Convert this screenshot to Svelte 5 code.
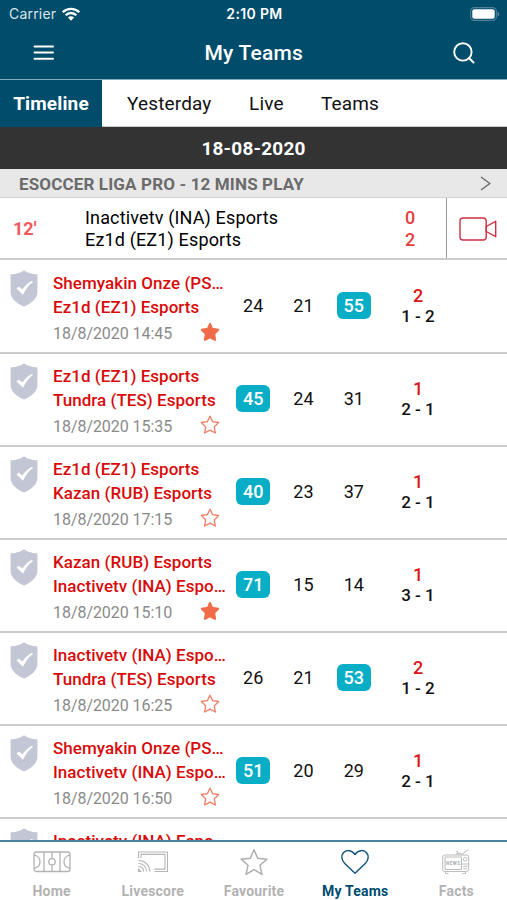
<script>
  const matches = [
    { home: 'Shemyakin Onze (PS…', away: 'Ez1d (EZ1) Esports', date: '18/8/2020 14:45', fav: true, odds: [24, 21, 55], best: 2, tip: '2', score: '1 - 2' },
    { home: 'Ez1d (EZ1) Esports', away: 'Tundra (TES) Esports', date: '18/8/2020 15:35', fav: false, odds: [45, 24, 31], best: 0, tip: '1', score: '2 - 1' },
    { home: 'Ez1d (EZ1) Esports', away: 'Kazan (RUB) Esports', date: '18/8/2020 17:15', fav: false, odds: [40, 23, 37], best: 0, tip: '1', score: '2 - 1' },
    { home: 'Kazan (RUB) Esports', away: 'Inactivetv (INA) Espo…', date: '18/8/2020 15:10', fav: true, odds: [71, 15, 14], best: 0, tip: '1', score: '3 - 1' },
    { home: 'Inactivetv (INA) Espo…', away: 'Tundra (TES) Esports', date: '18/8/2020 16:25', fav: false, odds: [26, 21, 53], best: 2, tip: '2', score: '1 - 2' },
    { home: 'Shemyakin Onze (PS…', away: 'Inactivetv (INA) Espo…', date: '18/8/2020 16:50', fav: false, odds: [51, 20, 29], best: 0, tip: '1', score: '2 - 1' }
  ];
</script>

{#snippet shield()}
  <svg class="shield" width="28" height="37" viewBox="0 0 28 37">
    <path d="M14 0.3C16.5 2.6 21.5 4.3 27.4 4.3V21.5C27.4 28.5 22 33 14 36.5C6 33 .6 28.5 .6 21.5V4.3C6.500 4.3 11.500 2.6 14 .3Z" fill="#c3c6d4" />
    <path d="M6.500 18.500l2.300-2 3.600 3.100C14.500 16.300 17.800 13 22 10.800l1 1.200C18.600 15.300 15.600 19.300 13 24.800Z" fill="#fff" />
  </svg>
{/snippet}

<div class="screen">
  <header>
    <div class="status">
      <span class="carrier">Carrier
        <svg width="18" height="14" viewBox="0 0 18 14" fill="none" stroke="#fff" stroke-width="2.300">
          <path d="M.8 5.200a11.600 11.600 0 0 1 16.400 0M3.700 8.200a7.500 7.500 0 0 1 10.600 0" />
          <path d="M9 13.700 5.900 10.600a4.400 4.400 0 0 1 6.200 0Z" fill="#fff" stroke="none" />
        </svg>
      </span>
      <span class="time">2:10 PM</span>
      <svg class="battery" width="30" height="14" viewBox="0 0 30 14">
        <rect x=".6" y=".6" width="25.800" height="12.800" rx="3.800" fill="none" stroke="#4f8299" stroke-width="1.100" />
        <rect x="2.300" y="2.300" width="22.400" height="9.400" rx="2" fill="#fff" />
        <path d="M27.700 4.700c1.800.7 1.800 3.900 0 4.600Z" fill="#6794aa" />
      </svg>
    </div>
    <div class="titlebar">
      <svg width="22" height="18" viewBox="0 0 22 18" stroke="#fff" stroke-width="1.900" stroke-linecap="round"><path d="M1.500 2.500h18.500M1.500 8.500h18.500M1.500 14.800h18.500" /></svg>
      <h1>My Teams</h1>
      <svg width="22" height="22" viewBox="0 0 22 22" fill="none" stroke="#fff" stroke-width="1.900" stroke-linecap="round"><circle cx="9.900" cy="9.900" r="8.700" /><path d="m16 16 4.500 4.500" /></svg>
    </div>
  </header>

  <nav class="tabs">
    <span class="active">Timeline</span>
    <span class="yesterday">Yesterday</span>
    <span class="live-tab">Live</span>
    <span class="teams-tab">Teams</span>
  </nav>
  <div class="date">18-08-2020</div>
  <div class="league">
    <span>ESOCCER LIGA PRO - 12 MINS PLAY</span>
    <svg width="11" height="15" viewBox="0 0 11 15" fill="none" stroke="#666" stroke-width="1.300"><path d="m1 1 8.800 6.500L1 14" /></svg>
  </div>
  <section class="live">
    <span class="minute">12'</span>
    <div class="names"><span>Inactivetv (INA) Esports</span><span>Ez1d (EZ1) Esports</span></div>
    <div class="goals"><span>0</span><span>2</span></div>
    <div class="video">
      <svg width="38" height="24" viewBox="0 0 38 24" fill="none" stroke="#cf2e43" stroke-width="1.400" stroke-linejoin="round"><rect x="1" y="1" width="26.200" height="22" rx="3" /><path d="M27.200 9.500 36.700 4.300v15.400L27.200 14.500Z" /></svg>
    </div>
  </section>

  <main>
    {#each matches as match}
      <article>
        {@render shield()}
        <div class="info">
          <span class="team">{match.home}</span>
          <span class="team">{match.away}</span>
          <div class="when">
            <span>{match.date}</span>
            {#if match.fav}
              <svg width="20" height="20" viewBox="0 0 20 20" fill="#f06c49" stroke="#f06c49" stroke-width="2" stroke-linejoin="round"><path d="m10 1.800 2.200 5 6 .9-4 4.200.9 6L10 15.400l-5.100 2.500.9-6-4-4.200 6-.9Z" /></svg>
            {:else}
              <svg width="20" height="20" viewBox="0 0 20 20" fill="none" stroke="#ee7c61" stroke-width="1.300" stroke-linejoin="round"><path d="m10 1.200 2.650 5.500 6 .8-4.350 4.400 1.050 6.100L10 15.200l-5.350 2.800 1.050-6.100L1.350 7.500l6-.8Z" /></svg>
            {/if}
          </div>
        </div>
        <div class="odds">
          {#each match.odds as odd, i}
            <span class:best={i === match.best}>{odd}</span>
          {/each}
        </div>
        <div class="result"><b>{match.tip}</b><span>{match.score}</span></div>
      </article>
    {/each}
    <article>
      {@render shield()}
      <div class="info"><span class="team">Inactivetv (INA) Espo</span></div>
    </article>
  </main>

  <nav class="bottom">
    <div>
      <svg width="40" height="28" viewBox="0 0 40 28" fill="none" stroke="#b3b3b3" stroke-width="1.300"><rect x="2" y="4" width="36" height="19.500" rx="2" /><path d="M20 4v6.500M20 17v6.500M2 7.500h1.500c6 2 6 10.500 0 12.500H2M38 7.500h-1.500c-6 2-6 10.500 0 12.500H38M12 4v19.500M28 4v19.500" /><circle cx="20" cy="13.750" r="3.200" /></svg>
      <span>Home</span>
    </div>
    <div>
      <svg width="34" height="28" viewBox="0 0 34 28" fill="none" stroke="#b5b5b5" stroke-width="1.100"><path d="M2.500 10V4h29v19.500H18.500M5 10V6.400h24v14.700H18.500" /><path d="M2.500 12.500c6.500 0 11 4.500 11.500 11M2.500 15.500c4.500 0 8 3.500 8.300 8M2.500 18.500c3 0 5 2 5.200 5M2.500 21.200l2.200 2.300H2.500Z" /></svg>
      <span>Livescore</span>
    </div>
    <div>
      <svg width="30" height="28" viewBox="0 0 30 28" fill="none" stroke="#adadad" stroke-width="1.500" stroke-linejoin="round"><path d="m15 1.800 3.700 8.400 9.200 1-6.900 6.100 2 9.100-8-4.700-8 4.700 2-9.100-6.900-6.100 9.200-1Z" /></svg>
      <span>Favourite</span>
    </div>
    <div class="current">
      <svg width="30" height="28" viewBox="0 0 30 28" fill="none" stroke="#14577a" stroke-width="1.500" stroke-linejoin="round"><path d="M15 25.200 5 15.800C1.600 12.500.8 7.900 3.200 5 6.300 1.300 12 1.900 15 6.500c3-4.600 8.700-5.200 11.800-1.500 2.400 2.900 1.600 7.500-1.800 10.800Z" /></svg>
      <span>My Teams</span>
    </div>
    <div>
      <svg width="30" height="28" viewBox="0 0 30 28" fill="none" stroke="#bcbcbc" stroke-width="1"><rect x="1.700" y="7" width="26" height="16.500" rx="2" /><path d="M4 9h16.500v12.500H4ZM4.500 23.500v2h3M24.500 23.500v2h-3M18.500 7l-2.600-3.500M20.500 7l5.400-4.500M15.500 3.500h1.500M26 2h1.500" /><path d="M14.500 7c1-2.300 6.500-2.300 7.500 0M20.500 16h7" /><circle cx="24.200" cy="11.300" r="1.800" /><path d="M22.300 18.300h4M22.300 20.800h4" /><text x="12.300" y="16.700" text-anchor="middle" class="news">NEWS</text></svg>
      <span>Facts</span>
    </div>
  </nav>
</div>

<style>
  :global(body) { margin: 0; background: #fff; }
  .screen { width: 507px; height: 900px; overflow: hidden; display: flex; flex-direction: column; background: #fff; color: #111; font-family: Roboto, sans-serif; }
  .screen > * { flex-shrink: 0; box-sizing: border-box; }
  svg { display: block; flex-shrink: 0; }
  header { height: 79px; background: #004c6b; color: #fff; }
  .status { height: 27px; display: grid; grid-template-columns: 1fr auto 1fr; align-items: center; padding: 0 7px 0 9px; box-sizing: border-box; font-family: Inter, sans-serif; font-size: 14px; }
  .carrier { display: flex; align-items: center; gap: 6px; color: #d8e5eb; letter-spacing: .2px; }
  .time { font-weight: 600; letter-spacing: .35px; }
  .battery { justify-self: end; }
  .titlebar { height: 52px; display: grid; grid-template-columns: 1fr auto 1fr; align-items: center; padding: 0 32px 0 32.500px; }
  .titlebar svg:last-child { justify-self: end; }
  h1 { margin: 0; font-size: 21px; font-weight: 500; letter-spacing: .2px; }
  .tabs { height: 48px; display: flex; align-items: center; border-top: 1px solid #86aabb; border-bottom: 1px solid #c9c9c9; font-size: 19px; letter-spacing: .15px; }
  .tabs .active { width: 102px; height: 47px; line-height: 47px; text-align: center; background: #004c6b; color: #fff; font-weight: 700; }
  .yesterday { margin-left: 25px; width: 122px; }
  .live-tab { width: 72px; }
  .date { height: 42px; line-height: 43px; text-align: center; background: #333; color: #fff; font-size: 19px; font-weight: 700; letter-spacing: .2px; }
  .league { height: 29px; display: flex; align-items: center; justify-content: space-between; padding: 1px 16px 0 19px; background: #e8e8e8; border-bottom: 1px solid #d2d2d2; color: #6b6b6b; font-size: 17px; font-weight: 700; letter-spacing: .15px; }
  .live { height: 62px; display: flex; align-items: center; border-bottom: 2px solid #ccc; font-size: 18px; line-height: 22px; }
  .minute { width: 72px; margin-left: 13px; padding-top: 2px; color: #f0595b; font-size: 18px; font-weight: 700; }
  .names, .goals { display: flex; flex-direction: column; padding-top: 2px; }
  .names { width: 307px; color: #000; letter-spacing: .15px; }
  .goals { width: 36px; text-align: center; color: #e5403f; font-weight: 500; }
  .video { height: 60px; flex: 1; margin-left: 18px; display: flex; align-items: center; justify-content: center; border-left: 1px solid #999; padding: 2px 0 0 1px; box-sizing: border-box; }
  main { height: 580px; padding-top: 1px; overflow: hidden; }
  article { height: 93px; box-sizing: border-box; display: flex; border-bottom: 2px solid #ccc; }
  .shield { margin: 9px 15px 0 10px; }
  .info { width: 175px; padding-top: 10px; display: flex; flex-direction: column; }
  .team { height: 24px; line-height: 24px; font-size: 17px; font-weight: 500; letter-spacing: .04px; color: #d80b0b; white-space: nowrap; }
  .when { display: flex; align-items: center; justify-content: space-between; height: 29px; padding-right: 8px; color: #8a8a8a; font-size: 16px; letter-spacing: -.05px; }
  .when svg { margin-bottom: 3px; }
  .odds { width: 151px; margin-top: 31px; height: 27px; display: flex; justify-content: space-around; font-size: 18px; line-height: 27px; }
  .odds span { width: 34px; text-align: center; }
  .odds .best { background: #08aec5; color: #fff; border-radius: 6px; font-weight: 500; }
  .result { width: 78px; display: flex; flex-direction: column; align-items: center; padding-top: 24px; font-size: 17px; line-height: 21px; font-weight: 500; }
  .result b { font-size: 18px; font-weight: 500; color: #dc1519; }
  .bottom { height: 60px; display: flex; padding-left: 1px; border-top: 2px solid #4a849f; background: #fff; }
  .bottom div { flex: 1; display: flex; flex-direction: column; align-items: center; padding-top: 6px; color: #b3b3b3; font-size: 14px; line-height: 18px; font-weight: 700; letter-spacing: .2px; }
  .bottom div span { margin-top: 6px; }
  .bottom .current { color: #004c6f; }
  .news { font: 700 4.500px Roboto, sans-serif; letter-spacing: .5px; fill: #aaa; stroke: none; }
</style>
